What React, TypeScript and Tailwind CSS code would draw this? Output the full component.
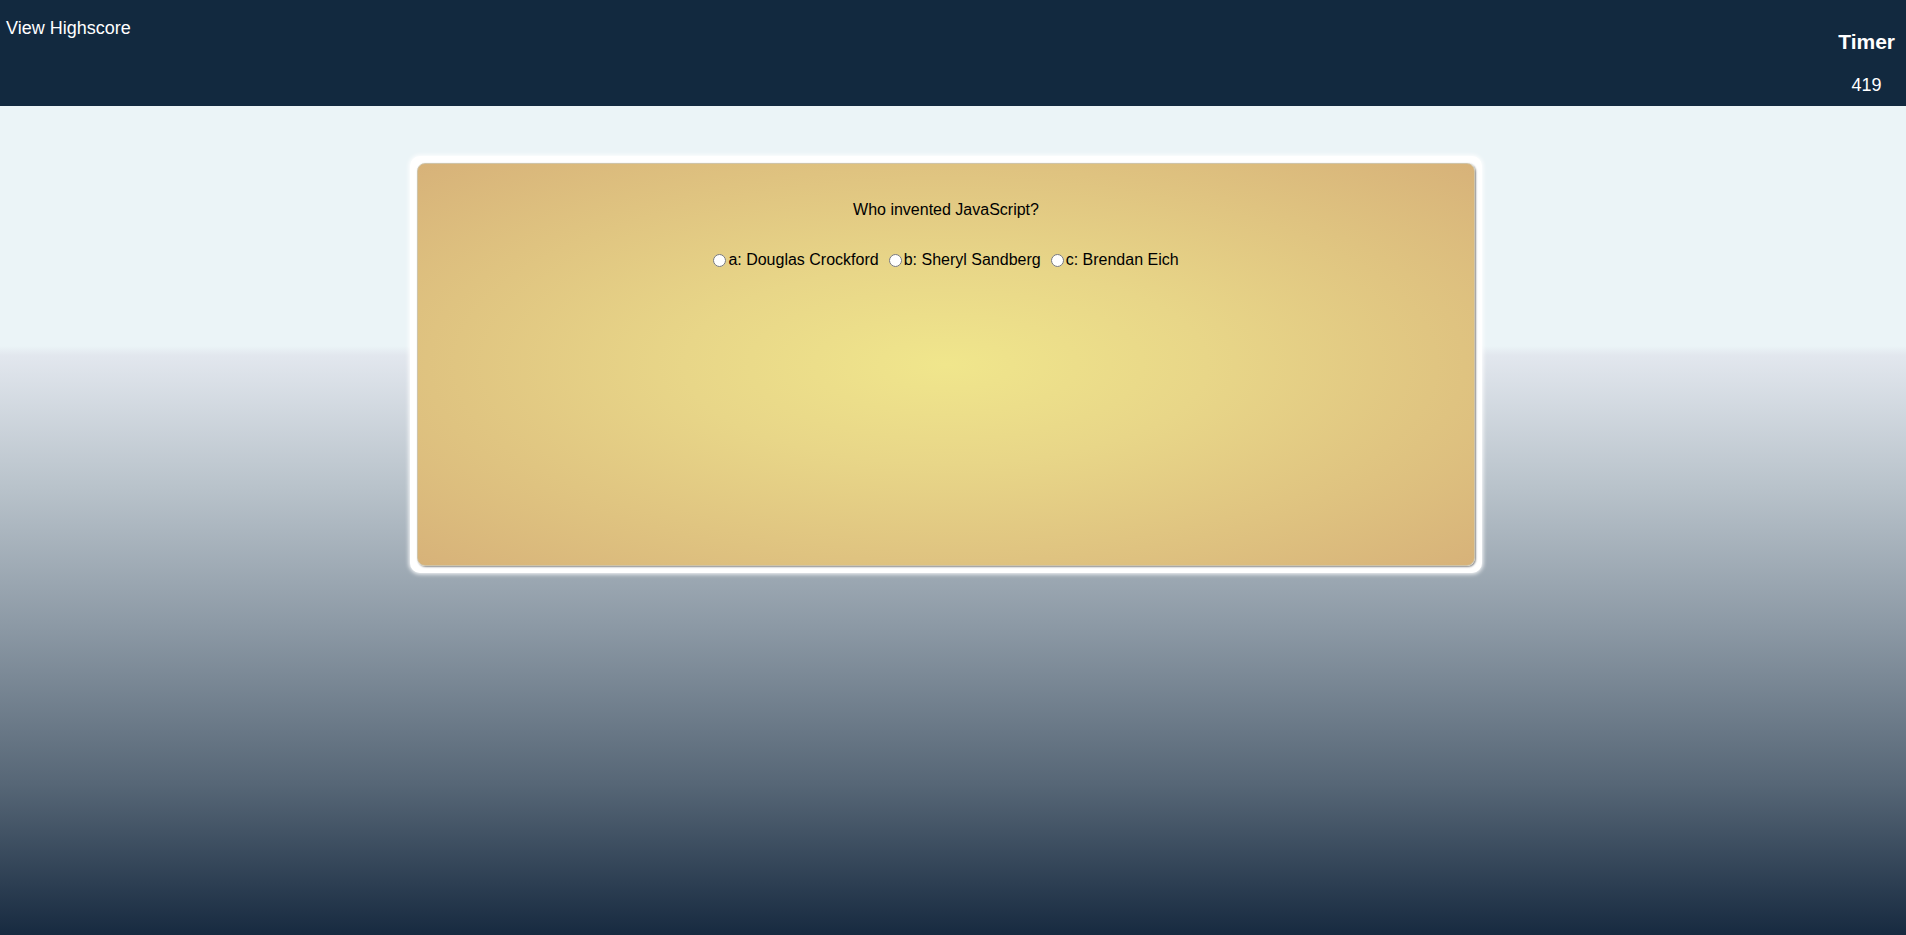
const options = ["a: Douglas Crockford", "b: Sheryl Sandberg", "c: Brendan Eich"];

export default function App() {
  return (
    <div className="min-h-[935px] font-['Liberation_Sans',Arial,sans-serif] bg-[linear-gradient(to_bottom,#ebf4f7_0%,#ebf4f7_37%,#e2e7ee_38%,#b9c3cb_52%,#8c99a5_67%,#566676_84%,#172a40_100%)]">
      <header className="h-[106px] bg-[#12293f] text-white flex justify-between">
        <div className="pt-[18px] pl-[6px] text-[18px] leading-[20px]">View Highscore</div>
        <div className="flex flex-col items-center pr-[11px] pt-[30px]">
          <h3 className="text-[21px] leading-[24px] font-bold">Timer</h3>
          <span className="mt-[21px] text-[18px] leading-[20px]">419</span>
        </div>
      </header>

      <main className="pt-[50px] pl-[410px]">
        <div className="w-[1072px] h-[417px] rounded-[10px] bg-white p-[7px] shadow-[0_0_4px_1px_#ffffff]">
          <div className="h-full rounded-[8px] border border-[#cfc4a8] shadow-[1px_1px_2px_#8a8a8a] bg-[radial-gradient(ellipse_at_center,#f0e68c_0%,#e8d688_35%,#d7b279_100%)] pt-[37px] text-center text-[16px] leading-[18px] text-black">
            <p>Who invented JavaScript?</p>
            <div className="mt-[32px] flex justify-center items-center">
              {options.map((o, i) => (
                <label key={i} className="flex items-center mr-[10px] last:mr-0">
                  <input type="radio" name="answer" className="w-[13px] h-[13px] mr-[2px]" />
                  <span>{o}</span>
                </label>
              ))}
            </div>
          </div>
        </div>
      </main>
    </div>
  );
}
